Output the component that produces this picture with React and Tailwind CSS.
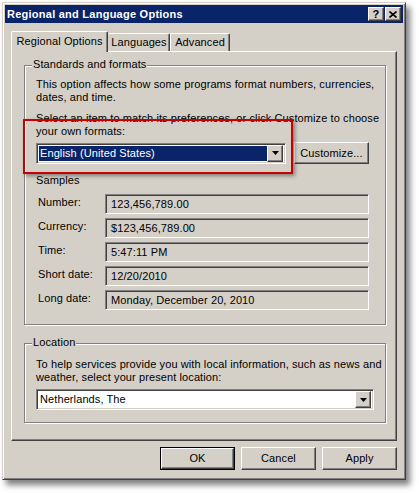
import React from "react";

const raised =
  "border border-t-white border-l-white border-r-[#404040] border-b-[#404040] shadow-[inset_-1px_-1px_0_#808080] bg-[#d4d0c8]";
const sunken =
  "border border-t-[#808080] border-l-[#808080] border-r-white border-b-white shadow-[inset_1px_1px_0_#404040,inset_-1px_-1px_0_#d4d0c8]";

function DownArrow() {
  return (
    <svg width="7" height="4" viewBox="0 0 7 4">
      <polygon points="0,0 7,0 3.5,4" fill="#000" />
    </svg>
  );
}

function ComboButton() {
  return (
    <div className={`${raised} w-[16px] h-[17px] flex items-center justify-center shrink-0`}>
      <DownArrow />
    </div>
  );
}

function GroupBox({ title, className, children }) {
  return (
    <div className={`relative border border-[#808080] shadow-[inset_1px_1px_0_#fff,1px_1px_0_#fff] ${className}`}>
      <span className="absolute -top-[8px] left-[7px] px-[1px] bg-[#d4d0c8] leading-[13px]">{title}</span>
      {children}
    </div>
  );
}

const samples = [
  ["Number:", "123,456,789.00"],
  ["Currency:", "$123,456,789.00"],
  ["Time:", "5:47:11 PM"],
  ["Short date:", "12/20/2010"],
  ["Long date:", "Monday, December 20, 2010"],
];

export default function App() {
  return (
    <div
      className="relative w-[419px] h-[493px] bg-white pt-[2px] pl-[2px] text-[11px] leading-[13px] tracking-[0.1px] text-black"
      style={{ fontFamily: '"Liberation Sans", Arial, sans-serif' }}
    >
      <div className="w-[404px] h-[478px] bg-[#d4d0c8] border border-t-[#d4d0c8] border-l-[#d4d0c8] border-r-[#404040] border-b-[#404040] shadow-[inset_1px_1px_0_#fff,inset_-1px_-1px_0_#808080,4px_5px_6px_rgba(0,0,0,0.5)] p-[2px] flex flex-col">
        {/* title bar */}
        <div className="h-[18px] bg-[#0a246a] flex items-center justify-between pl-[2px] pr-[2px]">
          <span className="text-white font-bold text-[11px] tracking-[0.25px]">Regional and Language Options</span>
          <div className="flex gap-[1px]">
            <div className={`${raised} w-[16px] h-[14px] flex items-center justify-center font-bold text-[11px] leading-none`}>?</div>
            <div className={`${raised} w-[16px] h-[14px] flex items-center justify-center`}>
              <svg width="8" height="7" viewBox="0 0 8 7">
                <path d="M0.5 0.5 L7.5 6.5 M7.5 0.5 L0.5 6.5" stroke="#000" strokeWidth="1.6" />
              </svg>
            </div>
          </div>
        </div>

        {/* tabs */}
        <div className="mt-[8px] mx-[6px] flex items-end h-[20px]">
          <div className="relative z-10 -mb-[1px] h-[21px] w-[97px] bg-[#d4d0c8] border-t border-l border-t-white border-l-white border-r border-r-[#404040] shadow-[inset_-1px_0_0_#808080] rounded-t-[2px] flex items-center justify-center pb-[1px]">
            Regional Options
          </div>
          <div className="h-[18px] w-[62px] border-t border-t-white border-r border-r-[#404040] shadow-[inset_-1px_0_0_#808080] rounded-t-[2px] flex items-center justify-center pl-[1px]">
            Languages
          </div>
          <div className="h-[18px] w-[60px] border-t border-l border-t-white border-l-white border-r border-r-[#404040] shadow-[inset_-1px_0_0_#808080] rounded-t-[2px] flex items-center justify-center">
            Advanced
          </div>
        </div>

        {/* panel */}
        <div className="mx-[6px] w-[386px] h-[390px] border border-t-white border-l-white border-r-[#404040] border-b-[#404040] shadow-[inset_-1px_-1px_0_#808080] pt-[13px] pl-[12px]">
          <GroupBox title="Standards and formats" className="w-[362px] h-[260px] pl-[11px] pt-[12px]">
            <p>This option affects how some programs format numbers, currencies, dates, and time.</p>
            <p className="mt-[8px]">Select an item to match its preferences, or click Customize to choose your own formats:</p>
            <div className="mt-[4px] flex items-center gap-[8px]">
              <div className={`${sunken} bg-white w-[250px] h-[21px] flex items-center pl-[2px] pr-[2px]`}>
                <div className="flex-1 h-[15px] bg-[#0a246a] text-white flex items-center pl-[1px]">English (United States)</div>
                <ComboButton />
              </div>
              <div className={`${raised} w-[75px] h-[22px] flex items-center justify-center`}>Customize...</div>
            </div>
            <p className="mt-[10px]">Samples</p>
            <div className="mt-[7px] flex flex-col gap-[4px] pl-[2px]">
              {samples.map(([label, value]) => (
                <div key={label} className="flex items-center">
                  <span className="w-[67px] -mt-[4px]">{label}</span>
                  <div className={`${sunken} w-[264px] h-[20px] flex items-center pl-[5px]`}>{value}</div>
                </div>
              ))}
            </div>
          </GroupBox>

          <GroupBox title="Location" className="mt-[18px] w-[362px] h-[80px] pl-[11px] pt-[14px]">
            <p>To help services provide you with local information, such as news and weather, select your present location:</p>
            <div className={`${sunken} mt-[5px] bg-white w-[338px] h-[21px] flex items-center pl-[3px] pr-[2px]`}>
              <span className="flex-1">Netherlands, The</span>
              <ComboButton />
            </div>
          </GroupBox>
        </div>

        {/* buttons */}
        <div className="mt-[6px] mr-[6px] flex justify-end gap-[6px]">
          <div className="border border-black">
            <div className={`${raised} w-[73px] h-[21px] flex items-center justify-center`}>OK</div>
          </div>
          <div className={`${raised} w-[75px] h-[23px] flex items-center justify-center`}>Cancel</div>
          <div className={`${raised} w-[75px] h-[23px] flex items-center justify-center`}>Apply</div>
        </div>
      </div>

      {/* highlight annotation */}
      <div className="absolute left-[23px] top-[119px] w-[270px] h-[55px] border-2 border-[#c80000] shadow-[2px_2px_4px_rgba(0,0,0,0.4)]" />
    </div>
  );
}
